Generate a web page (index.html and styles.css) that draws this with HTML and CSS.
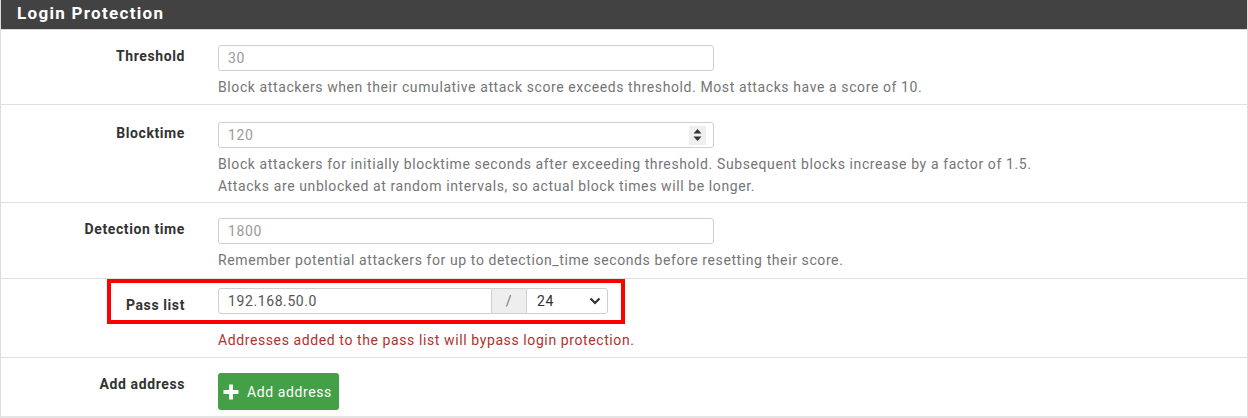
FILE: index.html
```html
<!DOCTYPE html>
<html lang="en">
<head>
  <meta charset="UTF-8">
  <title>Login Protection</title>
  <link rel="stylesheet" href="styles.css">
</head>
<body>
  <div class="panel">
    <div class="panel-heading">Login Protection</div>

    <div class="form-row row-threshold">
      <label class="row-label">Threshold</label>
      <div class="row-body">
        <div class="text-input placeholder">30</div>
        <p class="help">Block attackers when their cumulative attack score exceeds threshold. Most attacks have a score of 10.</p>
      </div>
    </div>

    <div class="form-row row-blocktime">
      <label class="row-label">Blocktime</label>
      <div class="row-body">
        <div class="text-input placeholder number">
          <span>120</span>
          <span class="spinner">
            <svg width="9" height="14" viewBox="0 0 9 14"><path d="M4.5 1 L8.5 5.5 L0.5 5.5 Z M4.5 13 L8.5 8.5 L0.5 8.5 Z" fill="#333"/></svg>
          </span>
        </div>
        <p class="help">Block attackers for initially blocktime seconds after exceeding threshold. Subsequent blocks increase by a factor of 1.5.<br>Attacks are unblocked at random intervals, so actual block times will be longer.</p>
      </div>
    </div>

    <div class="form-row row-detection">
      <label class="row-label">Detection time</label>
      <div class="row-body">
        <div class="text-input placeholder">1800</div>
        <p class="help">Remember potential attackers for up to detection_time seconds before resetting their score.</p>
      </div>
    </div>

    <div class="form-row row-pass">
      <div class="highlight"></div>
      <label class="row-label">Pass list</label>
      <div class="row-body">
        <div class="input-group">
          <div class="text-input addr">192.168.50.0</div>
          <div class="addon">/</div>
          <div class="text-input mask">
            <span>24</span>
            <svg width="12" height="8" viewBox="0 0 12 8"><path d="M1.5 1.5 L6 6 L10.5 1.5" fill="none" stroke="#333" stroke-width="2.2"/></svg>
          </div>
        </div>
        <p class="help danger">Addresses added to the pass list will bypass login protection.</p>
      </div>
    </div>

    <div class="form-row row-add">
      <label class="row-label">Add address</label>
      <div class="row-body">
        <button type="button" class="btn-add">
          <svg width="18" height="18" viewBox="0 0 18 18"><path d="M9 1.5 V16.5 M1.5 9 H16.5" stroke="#fff" stroke-width="3.8"/></svg>
          Add address
        </button>
      </div>
    </div>
  </div>
</body>
</html>
```

FILE: styles.css
```css
* {
  margin: 0;
  padding: 0;
  box-sizing: border-box;
}

body {
  background: #fff;
  font-family: Roboto, "Liberation Sans", sans-serif;
  font-size: 14px;
  letter-spacing: 0.6px;
  color: #333;
}

.panel {
  width: 1248px;
  height: 418px;
  border-left: 1px solid #dcdcdc;
  border-right: 1px solid #dcdcdc;
  border-bottom: 2px solid #e4e4e4;
}

.panel-heading {
  height: 30px;
  background: #424242;
  border-bottom: 1px solid #d8d8d8;
  color: #fff;
  font-weight: 700;
  font-size: 17px;
  letter-spacing: 1.3px;
  padding: 3px 0 0 16px;
}

.form-row {
  position: relative;
  display: flex;
  border-bottom: 1px solid #e0e0e0;
}

.row-threshold { height: 75px; padding-top: 15px; }
.row-blocktime { height: 98px; padding-top: 17px; }
.row-detection { height: 76px; padding-top: 15px; }
.row-pass { height: 79px; padding-top: 9px; }
.row-add { height: 59px; padding-top: 15px; border-bottom: none; }

.row-label {
  width: 184px;
  text-align: right;
  font-weight: 700;
  line-height: 20px;
  padding-top: 1px;
  color: #333;
}

.row-pass .row-label {
  padding-top: 7px;
}

.row-body {
  margin-left: 33px;
}

.text-input {
  width: 496px;
  height: 26px;
  border: 1px solid #cfcfcf;
  border-radius: 3px;
  padding: 0 9px;
  line-height: 24px;
  font-size: 14px;
  color: #555;
  background: #fff;
}

.placeholder {
  color: #9a9a9a;
}

.number {
  display: flex;
  justify-content: space-between;
  align-items: center;
  padding-right: 7px;
}

.spinner {
  display: flex;
  align-items: center;
  justify-content: center;
  width: 17px;
  height: 19px;
  background: #efefef;
}

.help {
  margin-top: 5px;
  line-height: 22px;
  color: #757575;
}

.help.danger {
  margin-top: 15px;
  color: #b3302d;
}

.input-group {
  display: flex;
}

.input-group .addr {
  width: 274px;
  border-radius: 3px 0 0 3px;
}

.addon {
  width: 34px;
  height: 26px;
  background: #eee;
  border-top: 1px solid #cfcfcf;
  border-bottom: 1px solid #cfcfcf;
  text-align: center;
  line-height: 24px;
  color: #777;
}

.input-group .mask {
  width: 82px;
  display: flex;
  justify-content: space-between;
  align-items: center;
  border-radius: 0 3px 3px 0;
  padding: 0 6px 0 10px;
  color: #333;
}

.highlight {
  position: absolute;
  left: 106px;
  top: 0;
  width: 518px;
  height: 45px;
  border: 4px solid #ff0000;
}

.btn-add {
  display: flex;
  align-items: center;
  gap: 7px;
  width: 121px;
  height: 37px;
  padding: 0 0 0 4px;
  background: #43a047;
  border: none;
  border-radius: 3px;
  color: #fff;
  font-family: Roboto, "Liberation Sans", sans-serif;
  font-size: 14px;
  letter-spacing: 0.6px;
}
```
